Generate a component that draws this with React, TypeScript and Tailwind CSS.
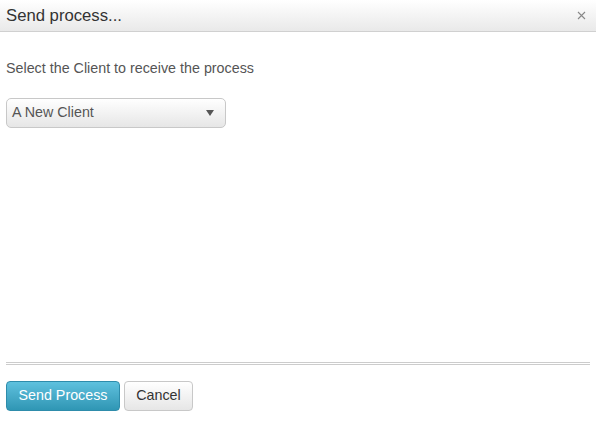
export default function App() {
  return (
    <div className="w-[596px] h-[430px] bg-white font-['Liberation_Sans',Arial,sans-serif] flex flex-col">
      {/* Header */}
      <div className="h-[32px] flex items-center justify-between pl-[6px] pr-[10px] bg-gradient-to-b from-white to-[#e9e9e9] border-b border-[#d0d0d0]">
        <span className="text-[16.7px] text-[#333]">Send process...</span>
        <svg width="9" height="9" viewBox="0 0 9 9" className="text-[#888]">
          <path d="M1 1 L8 8 M8 1 L1 8" stroke="currentColor" strokeWidth="1.1" />
        </svg>
      </div>

      {/* Body */}
      <div className="flex-1 px-[6px] pt-[28px]">
        <p className="text-[14.3px] text-[#555] leading-[16px]">Select the Client to receive the process</p>
        <div className="mt-[22px] w-[220px] h-[30px] rounded-[5px] border border-[#c8c8c8] bg-gradient-to-b from-white to-[#e6e6e6] flex items-center justify-between pl-[5px] pr-[11px]">
          <span className="text-[14.3px] text-[#555]">A New Client</span>
          <svg width="8" height="6" viewBox="0 0 8 6">
            <path d="M0 0 L8 0 L4 6 Z" fill="#555" />
          </svg>
        </div>
      </div>

      {/* Footer */}
      <div className="px-[6px] pb-[19px]">
        <div className="h-[3px] border-t border-b border-[#cccccc] w-[584px]" />
        <div className="mt-[16px] flex gap-[4px]">
          <button className="w-[114px] h-[30px] rounded-[4px] border border-[#2e8cab] bg-gradient-to-b from-[#5ec1de] to-[#2f96b4] text-white text-[14.3px]">
            Send Process
          </button>
          <button className="w-[69px] h-[30px] rounded-[4px] border border-[#c8c8c8] bg-gradient-to-b from-white to-[#e6e6e6] text-[#333] text-[14.3px]">
            Cancel
          </button>
        </div>
      </div>
    </div>
  )
}
